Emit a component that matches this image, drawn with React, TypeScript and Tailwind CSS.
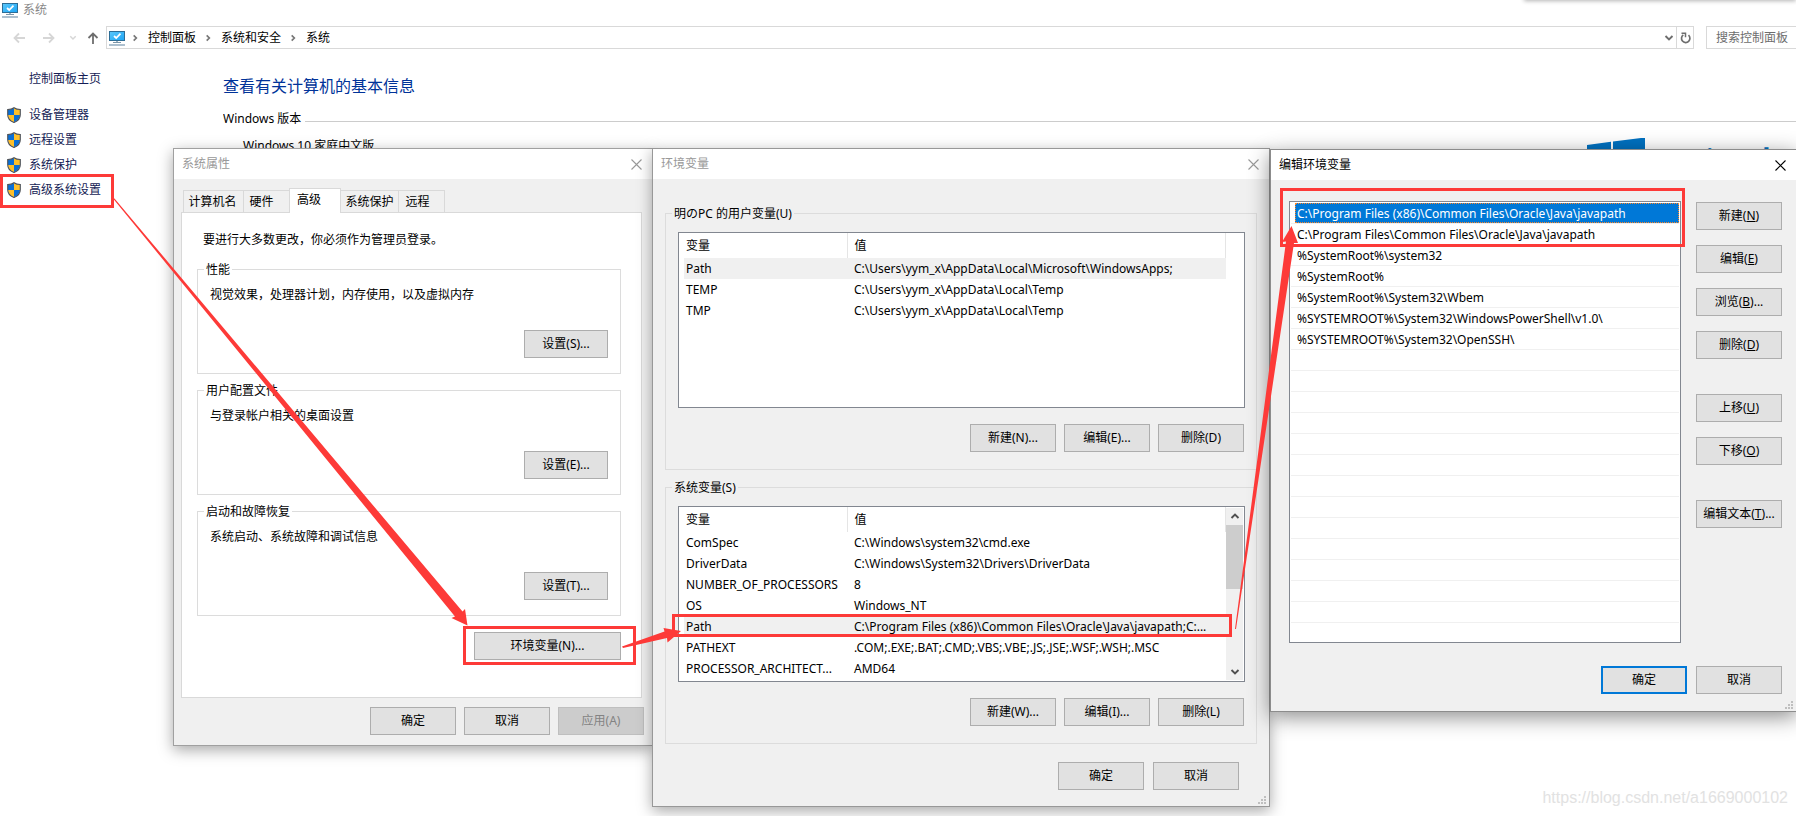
import React from "react";

type Variable = { name: string; value: string };

const userVariables: Variable[] = [
  { name: "Path", value: "C:\\Users\\yym_x\\AppData\\Local\\Microsoft\\WindowsApps;" },
  { name: "TEMP", value: "C:\\Users\\yym_x\\AppData\\Local\\Temp" },
  { name: "TMP", value: "C:\\Users\\yym_x\\AppData\\Local\\Temp" },
];

const systemVariables: Variable[] = [
  { name: "ComSpec", value: "C:\\Windows\\system32\\cmd.exe" },
  { name: "DriverData", value: "C:\\Windows\\System32\\Drivers\\DriverData" },
  { name: "NUMBER_OF_PROCESSORS", value: "8" },
  { name: "OS", value: "Windows_NT" },
  { name: "Path", value: "C:\\Program Files (x86)\\Common Files\\Oracle\\Java\\javapath;C:..." },
  { name: "PATHEXT", value: ".COM;.EXE;.BAT;.CMD;.VBS;.VBE;.JS;.JSE;.WSF;.WSH;.MSC" },
  { name: "PROCESSOR_ARCHITECT...", value: "AMD64" },
];

const pathEntries = [
  "C:\\Program Files (x86)\\Common Files\\Oracle\\Java\\javapath",
  "C:\\Program Files\\Common Files\\Oracle\\Java\\javapath",
  "%SystemRoot%\\system32",
  "%SystemRoot%",
  "%SystemRoot%\\System32\\Wbem",
  "%SYSTEMROOT%\\System32\\WindowsPowerShell\\v1.0\\",
  "%SYSTEMROOT%\\System32\\OpenSSH\\",
  ...Array<string>(13).fill(""),
];

const sections = [
  { title: "性能", text: "视觉效果，处理器计划，内存使用，以及虚拟内存", accessKey: "S" },
  { title: "用户配置文件", text: "与登录帐户相关的桌面设置", accessKey: "E" },
  { title: "启动和故障恢复", text: "系统启动、系统故障和调试信息", accessKey: "T" },
];

const editGroups = [
  [
    { label: "新建", accessKey: "N", dots: "" },
    { label: "编辑", accessKey: "E", dots: "" },
    { label: "浏览", accessKey: "B", dots: "..." },
    { label: "删除", accessKey: "D", dots: "" },
  ],
  [
    { label: "上移", accessKey: "U", dots: "" },
    { label: "下移", accessKey: "O", dots: "" },
  ],
  [{ label: "编辑文本", accessKey: "T", dots: "..." }],
];

function ComputerIcon() {
  return (
    <svg width="16" height="16" viewBox="0 0 16 16" className="shrink-0" aria-hidden="true">
      <defs>
        <linearGradient id="screen" x1="0" y1="0" x2="1" y2="1">
          <stop offset="0" stopColor="#5cc8fa" />
          <stop offset="1" stopColor="#1ba4f5" />
        </linearGradient>
      </defs>
      <rect x="0.5" y="1.5" width="15" height="9" fill="url(#screen)" stroke="#2d6d96" />
      <path d="M5 6l2.2 2L11.5 3.6" fill="none" stroke="#fff" strokeWidth="1.7" />
      <path d="M7 11h2v1.2H7z" fill="#9fb4c4" />
      <path d="M4 12.5h8" stroke="#7b95a8" />
      <path d="M0 15h16" stroke="#8aa5bb" strokeWidth="1.4" />
    </svg>
  );
}

function ShieldIcon() {
  return (
    <svg width="14" height="16" viewBox="0 0 14 16" className="shrink-0" aria-hidden="true">
      <clipPath id="shieldShape">
        <path d="M7 1C5.2 2.2 3 2.8 1 2.8v5C1 11.4 3.4 13.8 7 15.2c3.6-1.4 6-3.8 6-7.4v-5C11 2.8 8.8 2.2 7 1z" />
      </clipPath>
      <g clipPath="url(#shieldShape)">
        <path d="M0 0h7v8H0z" fill="#0a6fd6" />
        <path d="M7 0h7v8H7z" fill="#ffc02a" />
        <path d="M0 8h7v8H0z" fill="#ffc02a" />
        <path d="M7 8h7v8H7z" fill="#0a6fd6" />
      </g>
      <path
        d="M7 .7C5.2 2 3 2.5.7 2.5v5.3c0 3.8 2.5 6.3 6.3 7.7 3.8-1.4 6.3-3.9 6.3-7.7V2.5C11 2.5 8.8 2 7 .7z"
        fill="none"
        stroke="#4a4f55"
        strokeWidth="1.1"
      />
    </svg>
  );
}

function Chevron({ direction, className }: { direction: "up" | "down" | "right"; className: string }) {
  const paths = { up: "M1.5 6L5 2.5 8.5 6", down: "M1.5 3L5 6.5 8.5 3", right: "M3.5 1.5L6.5 4.5 3.5 7.5" };
  return (
    <svg width="10" height="9" viewBox="0 0 10 9" className={className} aria-hidden="true">
      <path d={paths[direction]} fill="none" stroke="currentColor" strokeWidth="1.9" />
    </svg>
  );
}

function Arrow({ direction, className }: { direction: "left" | "right" | "up"; className: string }) {
  const paths = {
    left: "M12 6H1.5M6 1.5L1.5 6 6 10.5",
    right: "M0 6h10.5M6 1.5L10.5 6 6 10.5",
    up: "M6 12V1.5M1.5 6L6 1.5 10.5 6",
  };
  return (
    <svg width="12" height="12" viewBox="0 0 12 12" className={className} aria-hidden="true">
      <path d={paths[direction]} fill="none" stroke="currentColor" strokeWidth="1.8" />
    </svg>
  );
}

function PushButton({
  children,
  className = "w-[86px] border border-[#adadad]",
  disabled = false,
}: {
  children: React.ReactNode;
  className?: string;
  disabled?: boolean;
}) {
  return (
    <button
      type="button"
      disabled={disabled}
      className={`flex h-7 shrink-0 items-center justify-center bg-[#e1e1e1] whitespace-nowrap disabled:bg-[#cccccc] disabled:text-[#838383] ${className}`}
    >
      {children}
    </button>
  );
}

function TitleBar({ title, active = false }: { title: string; active?: boolean }) {
  return (
    <div className={`flex h-[30px] items-center justify-between bg-white pr-2.5 pl-2 ${active ? "text-black" : "text-[#999999]"}`}>
      <h2>{title}</h2>
      <button type="button" aria-label="关闭">
        <svg width="11" height="11" viewBox="0 0 11 11" aria-hidden="true">
          <path d="M.5.5l10 10M10.5.5l-10 10" stroke="currentColor" strokeWidth="1.1" />
        </svg>
      </button>
    </div>
  );
}

function Grip() {
  return (
    <svg width="8" height="8" viewBox="0 0 8 8" className="absolute right-[3px] bottom-[2px]" aria-hidden="true">
      <path d="M6 0h2v2H6zM3 3h2v2H3zM6 3h2v2H6zM0 6h2v2H0zM3 6h2v2H3zM6 6h2v2H6z" fill="#bfbfbf" />
    </svg>
  );
}

function SystemPage() {
  return (
    <div className="flex min-h-screen flex-col">
      <header className="flex flex-col">
        <div className="flex h-5 items-center gap-[5px] pl-[2px] text-[#888888]">
          <ComputerIcon />
          <h1>系统</h1>
        </div>
        <div className="flex items-center pt-1.5">
          <nav className="flex w-[106px] shrink-0 items-center">
            <button type="button" aria-label="后退" className="ml-[13px]">
              <Arrow direction="left" className="text-[#d6d6d6]" />
            </button>
            <button type="button" aria-label="前进" className="ml-[18px]">
              <Arrow direction="right" className="text-[#d6d6d6]" />
            </button>
            <button type="button" aria-label="最近" className="ml-3.5">
              <Chevron direction="down" className="h-[7px] w-2 text-[#d6d6d6]" />
            </button>
            <button type="button" aria-label="向上" className="ml-2.5">
              <Arrow direction="up" className="text-[#6e6e6e]" />
            </button>
          </nav>
          <div className="flex h-[23px] flex-1 items-center border border-[#d9d9d9] pl-[2px]">
            <ComputerIcon />
            {["控制面板", "系统和安全", "系统"].map((crumb) => (
              <React.Fragment key={crumb}>
                <Chevron direction="right" className="mr-2 ml-[5px] h-2 w-2.5 text-[#777777]" />
                <a href="#" className="pr-[2px]">{crumb}</a>
              </React.Fragment>
            ))}
            <button type="button" aria-label="以前的位置" className="mr-[2px] ml-auto">
              <Chevron direction="down" className="text-[#6e6e6e]" />
            </button>
            <button type="button" aria-label="刷新" className="flex h-full w-[17px] items-center justify-center border-l border-[#d9d9d9]">
              <svg width="11" height="12" viewBox="0 0 11 12" aria-hidden="true">
                <path d="M8.5 3.2a4.2 4.2 0 1 1-5.2-.3" fill="none" stroke="#6e6e6e" strokeWidth="1.7" />
                <path d="M1.5 1.2h4v4" fill="none" stroke="#6e6e6e" strokeWidth="1.5" />
              </svg>
            </button>
          </div>
          <input
            type="text"
            aria-label="搜索"
            placeholder="搜索控制面板"
            className="ml-3 h-[23px] w-[90px] border border-r-0 border-[#d9d9d9] pl-[9px] placeholder:text-[#6d6d6d] placeholder:opacity-100"
          />
        </div>
      </header>
      <div className="flex flex-1">
        <nav className="flex w-[223px] shrink-0 flex-col pt-[22px] text-[#151c55]">
          <a href="#" className="pl-[29px]">控制面板主页</a>
          <ul className="flex flex-col gap-[9px] pt-5">
            {["设备管理器", "远程设置", "系统保护", "高级系统设置"].map((item) => (
              <li key={item}>
                <a href="#" className="flex items-center gap-2 pl-[7px]">
                  <ShieldIcon />
                  {item}
                </a>
              </li>
            ))}
          </ul>
        </nav>
        <main className="flex-1 overflow-hidden pt-[25px]">
          <h2 className="text-base leading-6 text-[#003399]">查看有关计算机的基本信息</h2>
          <div className="flex items-center gap-1 pt-[13px]">
            <h3>Windows 版本</h3>
            <div className="mt-1 h-px flex-1 bg-[#cccccc]" />
          </div>
          <div className="flex justify-between pt-[11px] pl-5">
            <p>Windows 10 家庭中文版</p>
            <div className="flex w-[209px] gap-4 text-[#0071c1]">
              <svg width="58" height="64" viewBox="0 0 58 64" className="shrink-0" aria-hidden="true">
                <path d="M0 7l24-3.3V31H0zM26 3.5L58 -.5v31.5H26zM0 33h24v26L0 56zM26 33h32v31l-32-4z" fill="currentColor" />
              </svg>
              <span className="pt-[2px] text-[46px] leading-[48px] whitespace-nowrap">Windows 10</span>
            </div>
          </div>
        </main>
      </div>
    </div>
  );
}

function SystemProperties() {
  return (
    <section
      aria-label="系统属性"
      className="absolute top-[148px] left-[173px] w-[480px] border border-[#a0a0a0] bg-[#f0f0f0] pb-2.5 shadow-[0_4px_14px_rgba(0,0,0,0.35)]"
    >
      <TitleBar title="系统属性" />
      <div className="pt-[9px] pr-2 pl-[7px]">
        <div role="tablist" className="ml-[2px] flex items-end">
          <button role="tab" type="button" className="h-[22px] w-[60px] border border-r-0 border-b-0 border-[#d9d9d9] pr-[2px]">计算机名</button>
          <button role="tab" type="button" className="h-[22px] w-[46px] border border-r-0 border-b-0 border-[#d9d9d9] pr-2.5">硬件</button>
          <button role="tab" type="button" aria-selected className="z-10 -mb-px h-[25px] w-[52px] border border-b-0 border-[#d9d9d9] bg-white pr-3 pb-[2px]">高级</button>
          <button role="tab" type="button" className="h-[22px] w-[58px] border border-b-0 border-l-0 border-[#d9d9d9]">系统保护</button>
          <button role="tab" type="button" className="h-[22px] w-[46px] border border-b-0 border-l-0 border-[#d9d9d9] pr-2">远程</button>
        </div>
        <div className="mr-[2px] flex h-[486px] flex-col border border-[#d9d9d9] bg-white pt-[19px] pr-5 pl-[15px]">
          <p className="pl-1.5">要进行大多数更改，你必须作为管理员登录。</p>
          <div className="flex flex-col gap-[7px] pt-3">
            {sections.map((section) => (
              <fieldset key={section.title} className="h-[114px] border border-[#dcdcdc] px-1.5">
                <legend className="px-[2px] pt-[2px]">{section.title}</legend>
                <div className="flex flex-col gap-[27px] px-1.5 pt-[9px]">
                  <p>{section.text}</p>
                  <PushButton className="w-[84px] self-end border border-[#adadad]">设置({section.accessKey})...</PushButton>
                </div>
              </fieldset>
            ))}
          </div>
          <div className="flex justify-end pt-4">
            <PushButton className="w-[147px] border border-[#adadad]">环境变量(N)...</PushButton>
          </div>
        </div>
        <div className="flex justify-end gap-2 pt-[9px]">
          <PushButton>确定</PushButton>
          <PushButton>取消</PushButton>
          <PushButton disabled className="w-[86px] border border-[#bfbfbf]">应用(A)</PushButton>
        </div>
      </div>
    </section>
  );
}

function VariableList({ rows, scrollbar = false }: { rows: Variable[]; scrollbar?: boolean }) {
  return (
    <div className="flex h-44 overflow-hidden border border-[#828790] bg-white pl-[5px]">
      <div className="flex-1">
        <table className="w-full table-fixed border-collapse">
          <thead>
            <tr className="h-[25px] text-left">
              <th className="w-[163px] border-r border-[#e5e5e5] p-0 pl-[2px] font-normal">变量</th>
              <th className="border-r border-[#e5e5e5] p-0 pl-[7px] font-normal">值</th>
            </tr>
          </thead>
          <tbody>
            {rows.map((row) => (
              <tr key={row.name} className={row.name === "Path" ? "h-[21px] bg-[#f0f0f0]" : "h-[21px]"}>
                <td className="p-0 pl-[2px] whitespace-nowrap">{row.name}</td>
                <td className="p-0 pl-[7px] whitespace-nowrap">{row.value}</td>
              </tr>
            ))}
          </tbody>
        </table>
      </div>
      {scrollbar ? (
        <div className="my-px mr-px flex w-[17px] flex-col bg-[#f0f0f0]">
          <button type="button" aria-label="向上滚动" className="flex h-[17px] items-center justify-center">
            <Chevron direction="up" className="text-[#505050]" />
          </button>
          <div className="h-16 bg-[#cdcdcd]" />
          <button type="button" aria-label="向下滚动" className="mt-auto flex h-[17px] items-center justify-center">
            <Chevron direction="down" className="text-[#505050]" />
          </button>
        </div>
      ) : (
        <div className="w-[18px]" />
      )}
    </div>
  );
}

function EnvironmentVariables() {
  const groups = [
    { legend: "明のPC 的用户变量(U)", rows: userVariables, buttons: ["新建(N)...", "编辑(E)...", "删除(D)"], scrollbar: false },
    { legend: "系统变量(S)", rows: systemVariables, buttons: ["新建(W)...", "编辑(I)...", "删除(L)"], scrollbar: true },
  ];
  return (
    <section
      aria-label="环境变量"
      className="absolute top-[148px] left-[652px] w-[618px] border border-[#989898] bg-[#f0f0f0] pb-4 shadow-[0_4px_14px_rgba(0,0,0,0.35)]"
    >
      <TitleBar title="环境变量" />
      <div className="flex flex-col gap-2 px-3 pt-[25px]">
        {groups.map((group) => (
          <fieldset key={group.legend} className="h-[266px] border border-[#dcdcdc] px-1.5">
            <legend className="px-[2px] pt-[2px]">{group.legend}</legend>
            <div className="pt-2.5 pr-[5px] pl-1.5">
              <VariableList rows={group.rows} scrollbar={group.scrollbar} />
              <div className="flex justify-end gap-2 pt-4 pr-px">
                {group.buttons.map((label) => (
                  <PushButton key={label}>{label}</PushButton>
                ))}
              </div>
            </div>
          </fieldset>
        ))}
      </div>
      <div className="flex justify-end gap-[9px] pt-[18px] pr-[30px]">
        <PushButton>确定</PushButton>
        <PushButton>取消</PushButton>
      </div>
      <Grip />
    </section>
  );
}

function EditVariable() {
  return (
    <section
      aria-label="编辑环境变量"
      className="absolute top-[149px] left-[1270px] w-[527px] border border-[#8c8c8c] bg-[#f0f0f0] pb-[17px] shadow-[0_5px_20px_rgba(0,0,0,0.45)]"
    >
      <TitleBar title="编辑环境变量" active />
      <div className="flex gap-[15px] pt-[21px] pr-[14px] pl-[18px]">
        <ul className="h-[442px] flex-1 border border-[#828790] bg-white px-px pt-px">
          {pathEntries.map((entry, index) => (
            <li key={index} className="h-[21px] border-b border-[#f0f0f0] pl-1">
              <div className={index === 0 ? "h-5 border border-dotted border-[#ff8728] bg-[#0078d7] pl-px leading-5 text-white" : "h-5 pl-[2px] leading-[22px]"}>
                {entry}
              </div>
            </li>
          ))}
        </ul>
        <div className="flex flex-col gap-[35px] pt-px">
          {editGroups.map((group, index) => (
            <div key={index} className="flex flex-col gap-[15px]">
              {group.map((button) => (
                <PushButton key={button.label}>
                  <span>
                    {button.label}(<span className="underline">{button.accessKey}</span>){button.dots}
                  </span>
                </PushButton>
              ))}
            </div>
          ))}
        </div>
      </div>
      <div className="flex justify-end gap-[9px] pt-[23px] pr-[14px]">
        <PushButton className="w-[86px] border-2 border-[#0078d7]">确定</PushButton>
        <PushButton>取消</PushButton>
      </div>
      <Grip />
    </section>
  );
}

function Annotations() {
  return (
    <svg width="1796" height="816" viewBox="0 0 1796 816" className="pointer-events-none absolute top-0 left-0" aria-hidden="true">
      <g fill="none" stroke="#fd3a38" strokeWidth="3">
        <rect x="1.5" y="175.5" width="111" height="31" />
        <rect x="464.5" y="627.5" width="170" height="36" />
        <rect x="673.5" y="615.5" width="557" height="20" />
        <rect x="1281.5" y="189.5" width="402" height="56" />
      </g>
      <g fill="#fd3a38">
        <path d="M113 198.5L114.5 198.5L462.5 611.5L465 609L467.5 625.5L451.5 618L455 616.5z" />
        <path d="M622 646.5L664.5 631.5L663.5 628L681 631L667.5 642.5L667 638L623 648z" />
        <path d="M1235 629L1286 241.5L1282 242L1291.5 226L1298 243L1294 243L1236 629z" />
      </g>
    </svg>
  );
}

export default function App() {
  return (
    <div className="relative min-h-screen overflow-hidden bg-white font-['Noto_Sans','Noto_Sans_CJK_SC',sans-serif] text-[12px] leading-4 text-black">
      <SystemPage />
      <div className="absolute -top-2 right-0 h-2 w-[272px] shadow-[0_1px_4px_rgba(0,0,0,0.3)]" />
      <SystemProperties />
      <EnvironmentVariables />
      <EditVariable />
      <Annotations />
      <p className="absolute right-2 bottom-1.5 font-['Liberation_Sans',sans-serif] text-base leading-6 text-[#e2e2e2]">
        https://blog.csdn.net/a1669000102
      </p>
    </div>
  );
}
